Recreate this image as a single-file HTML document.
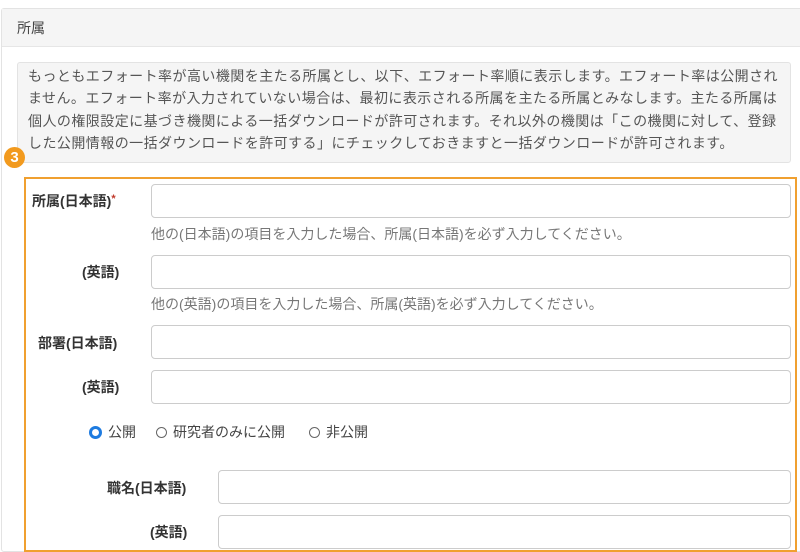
<!DOCTYPE html>
<html style="overflow:hidden"><head><meta charset="utf-8"><style>
html,body{margin:0;width:800px;height:552px;overflow:hidden}
body{background:#fff;font-family:"Liberation Sans","Noto Sans CJK JP",sans-serif;color:#333;position:relative}
.a{position:absolute;white-space:nowrap}
.panel{left:1px;top:8px;width:820px;height:560px;border:1px solid #e3e3e3;border-radius:3px;box-sizing:border-box;height:544px}
.hd{left:2px;top:9px;width:820px;height:37px;background:#f5f5f5;border-bottom:1px solid #e6e6e6}
.info{left:17px;top:62px;width:772px;height:99px;background:#f5f5f5;border:1px solid #e3e3e3;border-radius:3px}
.it{left:28px;top:65px;font-size:14px;line-height:22.3px;color:#555;letter-spacing:0.45px}
.ob{left:24px;top:177px;width:769px;height:371px;border:2px solid #f0a030}
.badge{left:4px;top:147px;width:21px;height:21px;border-radius:50%;background:#f29a1e;color:#fff;font-weight:bold;font-size:15px;line-height:21px;text-align:center}
.in{height:32px;border:1px solid #ccc;border-radius:4px;background:#fff}
.lb{font-size:14px;font-weight:bold;color:#333;text-align:right}
.hint{font-size:14px;color:#777}
.rad{font-size:14px;color:#444}
.rc{display:inline-block;width:11px;height:11px;border:1px solid #666;border-radius:50%;vertical-align:-1px;margin-right:6px;box-sizing:border-box}
</style></head><body>
<div class="a panel"></div>
<div class="a hd"></div>
<div class="a" style="left:17px;top:18px;font-size:14px;color:#444">所属</div>
<div class="a info"></div>
<div class="a it">もっともエフォート率が高い機関を主たる所属とし、以下、エフォート率順に表示します。エフォート率は公開され<br>ません。エフォート率が入力されていない場合は、最初に表示される所属を主たる所属とみなします。主たる所属は<br>個人の権限設定に基づき機関による一括ダウンロードが許可されます。それ以外の機関は「この機関に対して、登録<br>した公開情報の一括ダウンロードを許可する」にチェックしておきますと一括ダウンロードが許可されます。</div>
<div class="a ob"></div>
<div class="a badge">3</div>

<div class="a lb" style="left:32px;top:191px">所属(日本語)<span style="color:#c0392b;font-size:11px;vertical-align:4px">*</span></div>
<div class="a in" style="left:151px;top:184px;width:638px"></div>
<div class="a hint" style="left:151px;top:224px">他の(日本語)の項目を入力した場合、所属(日本語)を必ず入力してください。</div>

<div class="a lb" style="left:82px;top:262px">(英語)</div>
<div class="a in" style="left:151px;top:255px;width:638px"></div>
<div class="a hint" style="left:151px;top:294px">他の(英語)の項目を入力した場合、所属(英語)を必ず入力してください。</div>

<div class="a lb" style="left:38px;top:333px">部署(日本語)</div>
<div class="a in" style="left:151px;top:325px;width:638px"></div>

<div class="a lb" style="left:82px;top:377px">(英語)</div>
<div class="a in" style="left:151px;top:370px;width:638px"></div>

<div class="a rad" style="left:89px;top:422px"><span class="rc" style="border:3px solid #1e7be0;width:13px;height:13px;vertical-align:-2px"></span>公開</div>
<div class="a rad" style="left:156px;top:422px"><span class="rc"></span>研究者のみに公開</div>
<div class="a rad" style="left:309px;top:422px"><span class="rc"></span>非公開</div>

<div class="a lb" style="left:107px;top:478px">職名(日本語)</div>
<div class="a in" style="left:218px;top:470px;width:571px"></div>

<div class="a lb" style="left:150px;top:522px">(英語)</div>
<div class="a in" style="left:218px;top:515px;width:571px"></div>
</body></html>
